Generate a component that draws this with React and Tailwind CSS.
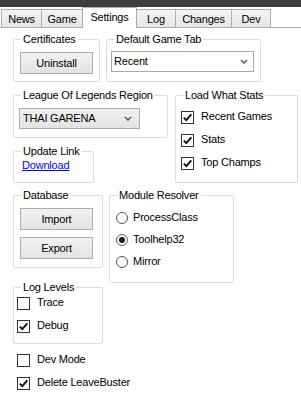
import React from "react";

const tabs = [
  { name: "News", w: "w-[41px]" },
  { name: "Game", w: "w-[42px]" },
  { name: "Settings", w: "w-[55px]", active: true },
  { name: "Log", w: "w-[40px]" },
  { name: "Changes", w: "w-[57px]" },
  { name: "Dev", w: "w-[40px]" },
];

// WinForms-style group box: bordered panel with caption sitting on the top line
const GroupBox = ({ title, className, children }) => (
  <div className={`relative border border-[#dcdcdc] rounded-[2px] ${className}`}>
    <span className="absolute -top-[7px] left-[7px] px-[2px] bg-white leading-[13px] whitespace-nowrap">{title}</span>
    {children}
  </div>
);

const Button = ({ label, className = "" }) => (
  <button className={`w-[73px] h-[22px] border border-[#adadad] bg-gradient-to-b from-[#f2f2f2] to-[#e3e3e3] text-black leading-[13px] ${className}`}>
    {label}
  </button>
);

const Chevron = () => (
  <svg width="8" height="5" viewBox="0 0 8 5">
    <polyline points="1,1 4,4 7,1" fill="none" stroke="#606060" strokeWidth="1.6" />
  </svg>
);

const CheckBox = ({ label, checked, className = "" }) => (
  <div className={`flex items-center h-[13px] whitespace-nowrap ${className}`}>
    <div className="w-[13px] h-[13px] shrink-0 border border-[#333333] bg-white flex items-center justify-center">
      {checked && (
        <svg width="11" height="11" viewBox="0 0 11 11">
          <path d="M1.8 5.6 L4.3 8.1 L9.3 2.4" fill="none" stroke="#111111" strokeWidth="2" />
        </svg>
      )}
    </div>
    <span className="ml-[7px] leading-[13px] -mt-[2px]">{label}</span>
  </div>
);

const Radio = ({ label, checked, className = "" }) => (
  <div className={`flex items-center h-[12px] whitespace-nowrap ${className}`}>
    <div className="w-[12px] h-[12px] shrink-0 rounded-full border border-[#555555] bg-white flex items-center justify-center">
      {checked && <div className="w-[6px] h-[6px] rounded-full bg-[#1a1a1a]" />}
    </div>
    <span className="ml-[5px] leading-[13px] -mt-[1px]">{label}</span>
  </div>
);

export default function App() {
  return (
    <div
      className="w-[301px] h-[396px] bg-white text-black text-[11px] tracking-[-0.2px] overflow-hidden"
      style={{ fontFamily: '"Liberation Sans", Arial, sans-serif' }}
    >
      <div className="h-[7px] bg-[#3d3d3d]" />

      {/* tab strip */}
      <div className="flex items-end h-[21px] pl-[1px] border-b border-[#acacac]">
        {tabs.map((t, i) =>
          t.active ? (
            <div
              key={t.name}
              className={`${t.w} h-[21px] -mb-px -ml-px border-l border-t border-r border-[#acacac] bg-white flex justify-center pt-[3px] leading-[13px]`}
            >
              {t.name}
            </div>
          ) : (
            <div
              key={t.name}
              className={`${t.w} h-[18px] ${i > 0 ? "-ml-px" : ""} border-l border-t border-r border-[#acacac] bg-gradient-to-b from-[#f3f3f3] to-[#e6e6e6] flex justify-center pt-[3px] leading-[13px]`}
            >
              {t.name}
            </div>
          )
        )}
      </div>

      <div className="pl-[13px]">
        {/* row 1 */}
        <div className="flex mt-[11px]">
          <GroupBox title="Certificates" className="w-[87px] h-[43px] pt-[12px] pl-[6px]">
            <Button label="Uninstall" />
          </GroupBox>
          <GroupBox title="Default Game Tab" className="w-[155px] h-[43px] ml-[6px] pt-[11px] pl-[4px]">
            <div className="w-[143px] h-[21px] border border-[#a9a9a9] bg-white flex items-center justify-between pl-[2px] pr-[5px]">
              <span className="leading-[13px]">Recent</span>
              <Chevron />
            </div>
          </GroupBox>
        </div>

        {/* row 2 */}
        <div className="flex mt-[13px]">
          <div className="flex flex-col w-[155px]">
            <GroupBox title="League Of Legends Region" className="w-[155px] h-[43px] pt-[12px] pl-[5px]">
              <div className="w-[121px] h-[21px] border border-[#acacac] bg-gradient-to-b from-[#efefef] to-[#e4e4e4] flex items-center justify-between pl-[3px] pr-[7px]">
                <span className="leading-[13px]">THAI GARENA</span>
                <Chevron />
              </div>
            </GroupBox>
            <GroupBox title="Update Link" className="w-[81px] h-[32px] mt-[13px] pt-[5px] pl-[8px]">
              <a href="#" className="text-[#0000ff] underline leading-[13px]">
                Download
              </a>
            </GroupBox>
          </div>
          <GroupBox title="Load What Stats" className="w-[123px] h-[88px] ml-[7px] pt-[15px] pl-[5px]">
            <div className="flex flex-col gap-[10px]">
              <CheckBox label="Recent Games" checked />
              <CheckBox label="Stats" checked />
              <CheckBox label="Top Champs" checked />
            </div>
          </GroupBox>
        </div>

        {/* row 3 */}
        <div className="flex mt-[12px]">
          <div className="flex flex-col w-[90px]">
            <GroupBox title="Database" className="w-[90px] h-[73px] pt-[12px] pl-[6px]">
              <Button label="Import" />
              <Button label="Export" className="mt-[7px]" />
            </GroupBox>
            <GroupBox title="Log Levels" className="w-[90px] h-[57px] mt-[19px] pt-[9px] pl-[3px]">
              <div className="flex flex-col gap-[10px]">
                <CheckBox label="Trace" />
                <CheckBox label="Debug" checked />
              </div>
            </GroupBox>
            <div className="flex flex-col gap-[10px] mt-[10px] ml-[4px]">
              <CheckBox label="Dev Mode" />
              <CheckBox label="Delete LeaveBuster" checked />
            </div>
          </div>
          <GroupBox title="Module Resolver" className="w-[125px] h-[88px] ml-[6px] pt-[16px] pl-[6px]">
            <div className="flex flex-col gap-[10px]">
              <Radio label="ProcessClass" />
              <Radio label="Toolhelp32" checked />
              <Radio label="Mirror" />
            </div>
          </GroupBox>
        </div>
      </div>
    </div>
  );
}
